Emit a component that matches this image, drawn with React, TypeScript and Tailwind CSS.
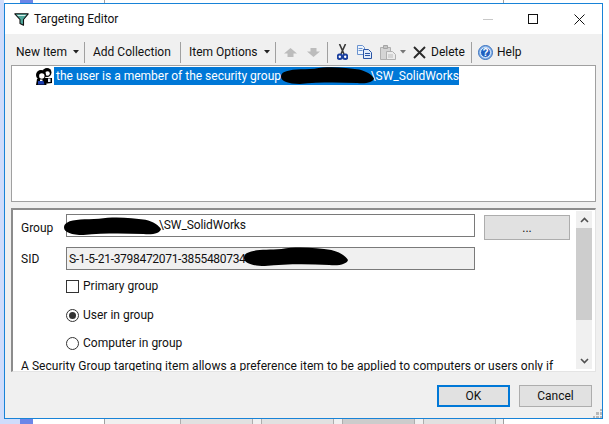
import { ReactNode } from 'react';

const font = { fontFamily: 'Roboto, "Noto Sans", sans-serif' };

function Sep() {
  return <div className="w-px h-[21px] bg-[#a0a0a0] shrink-0" />;
}

function Caret({ color = '#222' }: { color?: string }) {
  return (
    <svg width="6" height="4" viewBox="0 0 6 4" className="shrink-0">
      <path d="M0 0h6L3 3.5z" fill={color} />
    </svg>
  );
}

function Blob({ d, className }: { d: string; className: string }) {
  return (
    <svg className={`absolute ${className}`} viewBox="0 0 100 20" preserveAspectRatio="none">
      <path d={d} fill="#000" />
    </svg>
  );
}

const blobPath = 'M3 7C10 3 22 4 36 3 52 0 70 2 84 4 92 6 98 10 100 14 99 18 92 20 82 19 60 18 40 18 20 20 8 20 0 17 0 12 0 10 1 8 3 7z';

function Funnel() {
  return (
    <svg width="15" height="13" viewBox="0 0 15 13" className="shrink-0">
      <path d="M.8.8h13.4L9.5 6.5v5.7L6 10.500V6.500z" fill="#4fa89c" stroke="#111" strokeWidth="1.1" strokeLinejoin="round" />
      <path d="M3.500 2.500h8" stroke="#d8f0ec" strokeWidth="1" />
    </svg>
  );
}

function UsersIcon() {
  return (
    <svg width="17" height="17" viewBox="0 0 17 17" className="shrink-0">
      <circle cx="12" cy="4.500" r="4.500" fill="#000" />
      <circle cx="12.500" cy="5.500" r="2.300" fill="#fff" />
      <path d="M8 16l1-6h8v5z" fill="#000" />
      <path d="M13 10.500h2.500v3.500H13z" fill="#e6ecfa" />
      <circle cx="6" cy="7" r="5" fill="#000" />
      <circle cx="6.800" cy="8" r="2.700" fill="#fff" />
      <path d="M1 17l1-6h8.500l1 6z" fill="#000" />
      <path d="M3 13h5.500l1 3.500H3z" fill="#1c3fb0" />
      <path d="M5 11.500h2.500V13H5z" fill="#fff" />
    </svg>
  );
}

function ArrowIcon({ down }: { down?: boolean }) {
  return (
    <svg width="13" height="9" viewBox="0 0 13 9" className="shrink-0">
      <path d={down ? 'M3.500 0h6v3.500H13L6.500 9 0 3.500h3.500z' : 'M6.500 0L13 5.500H9.500V9h-6V5.500H0z'} fill="#bcbcbc" />
    </svg>
  );
}

function Scissors() {
  return (
    <svg width="11" height="16" viewBox="0 0 11 16" className="shrink-0">
      <path d="M2.500 0L7 10M8.500 0L4 10" stroke="#3a3a3a" strokeWidth="1.600" />
      <circle cx="2.800" cy="12.800" r="2.200" fill="#fff" stroke="#1a3f9e" strokeWidth="2" />
      <circle cx="8.200" cy="12.800" r="2.200" fill="#fff" stroke="#1a3f9e" strokeWidth="2" />
    </svg>
  );
}

function CopyIcon() {
  return (
    <svg width="15" height="14" viewBox="0 0 15 14" className="shrink-0">
      <path d="M.5.5h5l2 2v7h-7z" fill="#eef4fc" stroke="#6a93cf" />
      <path d="M1.500 3.500h4M1.500 5.500h4" stroke="#6a93cf" />
      <path d="M6.500 4.500h5l3 3v6h-8z" fill="#e3edfb" stroke="#2a55a5" />
      <path d="M8 8.500h5M8 10.500h5" stroke="#2a55a5" />
    </svg>
  );
}

function PasteIcon() {
  return (
    <svg width="16" height="15" viewBox="0 0 16 15" className="shrink-0">
      <path d="M.5 2.500h10v12H.5z" fill="#d5d5d5" stroke="#b0b0b0" />
      <path d="M3.500.5h4v3h-4z" fill="#c5c5c5" stroke="#a5a5a5" />
      <path d="M6.500 6.500h6l3 3v5h-9z" fill="#ececec" stroke="#b0b0b0" />
      <path d="M8 10h5M8 12h5" stroke="#bdbdbd" />
    </svg>
  );
}

function DeleteIcon() {
  return (
    <svg width="13" height="13" viewBox="0 0 13 13" className="shrink-0">
      <path d="M1 1l11 11M12 1L1 12" stroke="#2a2a2a" strokeWidth="1.900" />
    </svg>
  );
}

function HelpIcon() {
  return (
    <svg width="15" height="15" viewBox="0 0 15 15" className="shrink-0">
      <circle cx="7.500" cy="7.500" r="7" fill="#8db8ec" stroke="#3a70bd" />
      <circle cx="7.500" cy="7.500" r="5" fill="#1f5fc0" stroke="#e4f0fc" />
      <text x="7.500" y="11" textAnchor="middle" fontSize="10" fontWeight="700" fill="#fff" fontFamily="Liberation Sans, sans-serif">?</text>
    </svg>
  );
}

function Option({ control, label, className }: { control: ReactNode; label: string; className: string }) {
  return (
    <div className={`flex items-center gap-[4px] ml-[53px] ${className}`}>
      {control}
      <span>{label}</span>
    </div>
  );
}

export default function App() {
  return (
    <div className="relative w-[609px] h-[424px] bg-white overflow-hidden text-[12px] leading-[16px] text-[#111]" style={font}>
      {/* desktop behind the dialog */}
      <div className="absolute left-0 top-0 w-[4px] h-[424px] bg-[#cfdcfb]" />
      <div className="absolute left-[20px] top-0 w-[13px] h-[3px] bg-[#6b86e8]" />
      <div className="absolute left-[20px] bottom-0 w-[13px] h-[5px] bg-[#6b86e8]" />
      <div className="absolute left-0 bottom-0 w-[20px] h-[5px] bg-[#cfdcfb]" />
      <div className="absolute left-[104px] top-0 w-px h-[3px] bg-[#a0a0a0]" />
      <div className="absolute left-[503px] top-0 w-px h-[3px] bg-[#a0a0a0]" />
      <div className="absolute left-[104px] bottom-0 w-[400px] h-[5px] bg-[#f0f0f0] border-x border-[#a0a0a0]" />
      <div className="absolute left-[180px] bottom-0 w-[73px] h-[5px] bg-[#e1e1e1] border-x border-[#adadad]" />
      <div className="absolute left-[261px] bottom-0 w-[73px] h-[5px] bg-[#e1e1e1] border-x border-[#adadad]" />
      <div className="absolute left-[342px] bottom-0 w-[73px] h-[5px] bg-[#cccccc] border-x border-[#adadad]" />
      <div className="absolute left-[423px] bottom-0 w-[73px] h-[5px] bg-[#e1e1e1] border-x border-[#adadad]" />

      {/* dialog */}
      <div className="absolute left-[4px] top-[3px] w-[599px] h-[416px] border border-[#1883d7] bg-[#f0f0f0] flex flex-col">
        {/* title bar */}
        <div className="h-[30px] bg-white flex items-center pl-[9px] shrink-0">
          <Funnel />
          <span className="ml-[5px] text-[#111]">Targeting Editor</span>
          <div className="ml-auto flex items-center mr-[17px]">
            <div className="w-[10px] h-px bg-[#c8c8c8]" />
            <div className="ml-[35px] w-[10px] h-[10px] border border-[#111]" />
            <svg width="11" height="11" viewBox="0 0 11 11" className="ml-[36px]">
              <path d="M.5.5l10 10M10.500.5l-10 10" stroke="#111" />
            </svg>
          </div>
        </div>

        {/* toolbar */}
        <div className="h-[31px] flex items-center shrink-0 pl-[11px] pt-[5px]">
          <span className="w-[57px] whitespace-nowrap">New Item</span>
          <Caret />
          <span className="ml-[5px]"><Sep /></span>
          <span className="ml-[8px] w-[79px] whitespace-nowrap">Add Collection</span>
          <span className="ml-[8px]"><Sep /></span>
          <span className="ml-[8px] w-[75px] whitespace-nowrap">Item Options</span>
          <Caret />
          <span className="ml-[5px]"><Sep /></span>
          <span className="ml-[8px]"><ArrowIcon /></span>
          <span className="ml-[10px]"><ArrowIcon down /></span>
          <span className="ml-[7px]"><Sep /></span>
          <span className="ml-[9px]"><Scissors /></span>
          <span className="ml-[9px]"><CopyIcon /></span>
          <span className="ml-[8px]"><PasteIcon /></span>
          <span className="ml-[4px]"><Caret color="#777" /></span>
          <span className="ml-[7px]"><DeleteIcon /></span>
          <span className="ml-[5px] w-[34px] whitespace-nowrap">Delete</span>
          <span className="ml-[6px]"><Sep /></span>
          <span className="ml-[6px]"><HelpIcon /></span>
          <span className="ml-[4px]">Help</span>
        </div>

        {/* condition tree */}
        <div className="relative mx-[6px] h-[137px] shrink-0 bg-white border border-[#a0a0a0] pl-[23px] pt-[1px] flex items-start">
          <div className="mt-[1px]"><UsersIcon /></div>
          <div className="ml-[2px] w-[405px] h-[18px] bg-[#0078d7] text-white pl-[2px] flex items-center whitespace-nowrap">
            <span className="w-[317px]">the user is a member of the security group</span>
            <span>\SW_SolidWorks</span>
          </div>
          <Blob d={blobPath} className="left-[269px] top-0 w-[93px] h-[18px]" />
        </div>

        {/* item details */}
        <div className="relative mx-[6px] mt-[6px] h-[164px] shrink-0 bg-white border-t-2 border-l-2 border-[#8c8c8c] border-r border-b border-r-[#e4e4e4] border-b-[#e4e4e4] overflow-hidden flex">
          <div className="flex-1 min-w-0 flex flex-col">
            <div className="flex items-start mt-[4px]">
              <span className="ml-[8px] w-[45px] mt-[6px]">Group</span>
              <div className="w-[409px] h-[23px] border border-[#7a7a7a] flex items-center pl-[92px] pb-[1px] tracking-[-0.1px] shrink-0">\SW_SolidWorks</div>
              <button className="ml-[9px] w-[86px] h-[25px] mt-[1px] bg-[#e1e1e1] border border-[#adadad] text-center shrink-0">...</button>
            </div>
            <div className="flex items-center mt-[7px] h-[23px]">
              <span className="ml-[8px] w-[45px]">SID</span>
              <div className="w-[409px] h-[23px] border border-[#7a7a7a] bg-[#f0f0f0] flex items-center pl-[2px] tracking-[-0.3px] shrink-0">S-1-5-21-3798472071-3855480734</div>
            </div>
            <Option
              className="mt-[8px]"
              label="Primary group"
              control={<div className="w-[13px] h-[13px] border border-[#333] bg-white" />}
            />
            <Option
              className="mt-[13px]"
              label="User in group"
              control={
                <div className="w-[13px] h-[13px] rounded-full border border-[#333] flex items-center justify-center">
                  <div className="w-[7px] h-[7px] rounded-full bg-[#333]" />
                </div>
              }
            />
            <Option
              className="mt-[12px]"
              label="Computer in group"
              control={<div className="w-[13px] h-[13px] rounded-full border border-[#333]" />}
            />
            <p className="ml-[8px] mt-[7px] whitespace-nowrap tracking-[0.05px]">
              A Security Group targeting item allows a preference item to be applied to computers or users only if
            </p>
          </div>

          {/* scrollbar */}
          <div className="w-[16px] mr-[3px] mt-[1px] mb-[2px] bg-[#f0f0f0] flex flex-col shrink-0">
            <div className="h-[17px] flex items-center justify-center">
              <svg width="9" height="6" viewBox="0 0 9 6"><path d="M1 5l3.500-3.500L8 5" fill="none" stroke="#505050" strokeWidth="1.600" /></svg>
            </div>
            <div className="h-[92px] bg-[#cdcdcd]" />
            <div className="flex-1" />
            <div className="h-[17px] flex items-center justify-center">
              <svg width="9" height="6" viewBox="0 0 9 6"><path d="M1 1l3.500 3.500L8 1" fill="none" stroke="#505050" strokeWidth="1.600" /></svg>
            </div>
          </div>

          <Blob d={blobPath} className="left-[51px] top-[6px] w-[97px] h-[19px]" />
          <Blob d={blobPath} className="left-[231px] top-[36px] w-[104px] h-[20px]" />
        </div>

        {/* dialog buttons */}
        <div className="flex justify-end mt-[13px] mr-[10px] gap-[9px]">
          <button className="w-[73px] h-[22px] bg-[#e1e1e1] border-2 border-[#0078d7] flex items-center justify-center">OK</button>
          <button className="w-[73px] h-[22px] bg-[#e1e1e1] border border-[#adadad] flex items-center justify-center">Cancel</button>
        </div>

        {/* resize grip */}
        <div className="absolute right-0 bottom-0 w-[9px] h-[9px] grid grid-cols-3 gap-px">
          <span /><span /><span className="bg-[#b8b8b8]" />
          <span /><span className="bg-[#b8b8b8]" /><span className="bg-[#b8b8b8]" />
          <span className="bg-[#b8b8b8]" /><span className="bg-[#b8b8b8]" /><span className="bg-[#b8b8b8]" />
        </div>
      </div>
    </div>
  );
}
